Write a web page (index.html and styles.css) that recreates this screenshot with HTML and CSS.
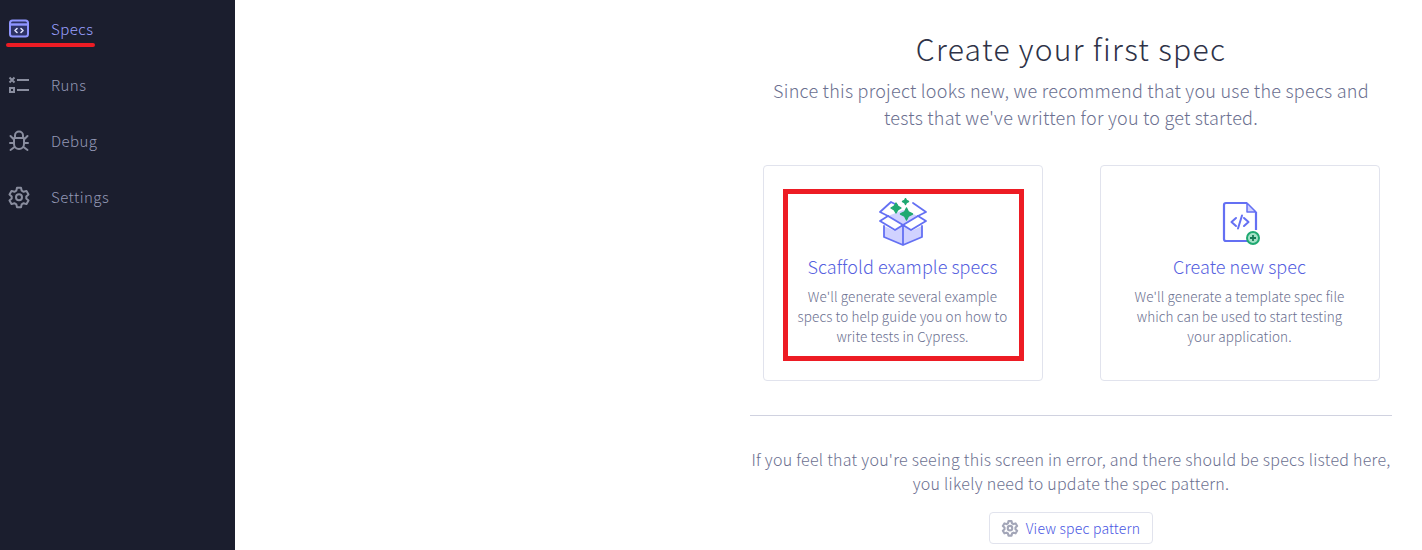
FILE: index.html
```html
<!DOCTYPE html>
<html lang="en">
<head>
  <meta charset="UTF-8">
  <title>Create your first spec</title>
  <link rel="stylesheet" href="styles.css">
</head>
<body>
  <nav class="sidebar">
    <a class="nav-item active">
      <svg class="nav-icon" viewBox="0 0 24 24" fill="none">
        <rect x="3" y="3.500" width="18" height="16" rx="2.500" fill="#2d3366" stroke="#8f95ff" stroke-width="2"/>
        <path d="M3 7.500h18" stroke="#8f95ff" stroke-width="2.400"/>
        <path d="M10 11.500l-2 2 2 2M14 11.500l2 2-2 2" stroke="#e1e3ff" stroke-width="1.600" stroke-linecap="round" stroke-linejoin="round"/>
      </svg>
      <span class="nav-label">Specs</span>
      <span class="mark-line"></span>
    </a>
    <a class="nav-item">
      <svg class="nav-icon" viewBox="0 0 24 24" fill="none" stroke="#8a8e9f" stroke-width="2">
        <path d="M2.500 4.500l5 5M7.500 4.500l-5 5"/>
        <rect x="3" y="15" width="4" height="4"/>
        <path d="M10 7h12M10 17h12"/>
      </svg>
      <span class="nav-label">Runs</span>
    </a>
    <a class="nav-item">
      <svg class="nav-icon" viewBox="0 0 24 24" fill="none" stroke="#8a8e9f" stroke-width="2" stroke-linecap="round" stroke-linejoin="round">
        <path d="M8 9V6.500a4 4 0 0 1 8 0V9M7 9h10M7 9v6a5 5 0 0 0 10 0V9"/>
        <path d="M7 10.500L3.500 7M17 10.500L20.500 7M7 14H3M17 14h4M7.500 18l-4 3M16.500 18l4 3"/>
      </svg>
      <span class="nav-label">Debug</span>
    </a>
    <a class="nav-item">
      <svg class="nav-icon" viewBox="0 0 24 24" fill="none" stroke="#8a8e9f" stroke-width="2" stroke-linejoin="round">
        <path d="M10 2.800h4l.7 2.900 1.900 1.100 2.900-.9 2 3.500-2.200 2v2.200l2.200 2-2 3.500-2.900-.9-1.900 1.100-.7 2.900h-4l-.7-2.900-1.900-1.100-2.900.9-2-3.500 2.200-2v-2.200l-2.200-2 2-3.500 2.900.9 1.900-1.100z"/>
        <circle cx="12" cy="12.200" r="3"/>
      </svg>
      <span class="nav-label">Settings</span>
    </a>
  </nav>

  <main class="content">
    <div class="panel">
      <h1>Create your first spec</h1>
      <p class="lead">Since this project looks new, we recommend that you use the specs and tests that we've written for you to get started.</p>

      <div class="cards">
        <div class="card">
          <span class="mark-box"></span>
          <svg class="card-icon" width="48" height="48" viewBox="0 0 48 48" fill="none" stroke="#6470f3" stroke-width="1.800" stroke-linejoin="round" stroke-linecap="round">
            <path d="M9 18L24 12l15 6-15 9z" fill="#d0d2ff" stroke="none"/>
            <path d="M24 27l-9 5.500L5 28v11l19 8 19-8V28l-10 4.500z" fill="#d0d2ff" stroke="none"/>
            <path d="M5 28v11l19 8 19-8V28M24 47V27"/>
            <path d="M24 27L16 32 1 23l8-5M24 27l8 5 15-9-8-5"/>
            <path d="M9 18L1 14 12 4l6 3M39 18l8-4-13-9"/>
            <path d="M9 18l15 9 15-9"/>
            <g fill="#1fa971" stroke="#1fa971" stroke-width="1.400">
              <path d="M17 5l1.800 3.200 3.200 1.800-3.200 1.800-1.800 3.200-1.800-3.200-3.200-1.800 3.200-1.800z"/>
              <path d="M26.500 .500l1 2 2 1-2 1-1 2-1-2-2-1 2-1z"/>
              <path d="M27.500 10l2 4 4 2-4 2-2 4-2-4-4-2 4-2z"/>
            </g>
          </svg>
          <h2>Scaffold example specs</h2>
          <p>We'll generate several example specs to help guide you on how to write tests in Cypress.</p>
        </div>
        <div class="card">
          <svg class="card-icon" width="48" height="48" viewBox="0 0 48 48" fill="none" stroke="#6470f3" stroke-width="2.200" stroke-linejoin="round">
            <path d="M31 5l9 9h-9z" fill="#d0d2ff" stroke-width="1.500"/>
            <path d="M31 5H10a2 2 0 0 0-2 2v34a2 2 0 0 0 2 2h22M40 14v18"/>
            <path d="M20 20l-4.500 4 4.500 4M28 20l4.500 4-4.500 4M26 17.500l-4 13" stroke-linecap="round" stroke-width="2"/>
            <circle cx="37" cy="40" r="6" fill="#a3e2c6" stroke="#1fa971" stroke-width="2"/>
            <path d="M37 37v6M34 40h6" stroke="#177a55" stroke-width="1.800"/>
          </svg>
          <h2>Create new spec</h2>
          <p>We'll generate a template spec file which can be used to start testing your application.</p>
        </div>
      </div>

      <div class="help">
        <p>If you feel that you're seeing this screen in error, and there should be specs listed here, you likely need to update the spec pattern.</p>
        <button class="pattern-btn" type="button">
          <svg width="18" height="18" viewBox="0 0 24 24" fill="none" stroke="#a3a6b8" stroke-width="2.800" stroke-linejoin="round">
            <path d="M10 2.800h4l.7 2.900 1.900 1.100 2.900-.9 2 3.500-2.200 2v2.200l2.200 2-2 3.500-2.900-.9-1.900 1.100-.7 2.900h-4l-.7-2.900-1.900-1.100-2.900.9-2-3.500 2.200-2v-2.200l-2.200-2 2-3.500 2.900.9 1.900-1.100z"/>
            <circle cx="12" cy="12.200" r="3"/>
          </svg>
          View spec pattern
        </button>
      </div>
    </div>
  </main>
</body>
</html>
```

FILE: styles.css
```css
/* Base styling */
html, body {
  height: 100%;
}
body {
  margin: 0;
  display: flex;
  overflow: hidden;
  font-family: "Noto Sans CJK KR", "Noto Sans", sans-serif;
  font-weight: 300;
  background: #fff;
  color: #6b7090;
}

/* Sidebar */
.sidebar {
  flex: 0 0 235px;
  background: #1b1e2e;
  padding-top: 1px;
}
.nav-item {
  position: relative;
  display: flex;
  align-items: center;
  gap: 20px;
  height: 56px;
  padding-left: 7px;
  font-size: 15px;
  letter-spacing: 0.45px;
  color: #9398b5;
}
.nav-label {
  padding-bottom: 2px;
}
.nav-item.active {
  color: #9aa0ff;
}
.nav-icon {
  width: 24px;
  height: 24px;
  flex: none;
}
.mark-line {
  position: absolute;
  left: 6px;
  top: 42px;
  width: 89px;
  height: 4px;
  border-radius: 2px;
  background: #ed1c24;
}

/* Main content */
.content {
  flex: 1;
  display: flex;
  justify-content: flex-end;
  padding-right: 30px;
}
.panel {
  width: 642px;
  text-align: center;
}
h1 {
  margin: 25px 0 0;
  font-size: 30px;
  line-height: 46px;
  font-weight: 300;
  letter-spacing: 1.3px;
  color: #2e3247;
}
.lead {
  width: 610px;
  margin: 6px auto 0;
  font-size: 18px;
  line-height: 27px;
  letter-spacing: 0.25px;
}

/* Cards */
.cards {
  display: flex;
  justify-content: center;
  gap: 57px;
  margin-top: 34px;
  padding-bottom: 34px;
  border-bottom: 1px solid #d0d2e0;
}
.card {
  position: relative;
  box-sizing: border-box;
  width: 280px;
  height: 216px;
  padding: 32px 16px 0;
  border: 1px solid #e1e3ed;
  border-radius: 4px;
}
.card-icon {
  display: block;
  margin: 0 auto;
}
.card h2 {
  margin: 7px 0 7px;
  font-size: 18px;
  line-height: 26px;
  font-weight: 300;
  letter-spacing: 0.05px;
  color: #5560e0;
}
.card p {
  margin: 0 14px;
  font-size: 13.500px;
  line-height: 20px;
  letter-spacing: 0.1px;
}
.mark-box {
  position: absolute;
  left: 19px;
  top: 23px;
  width: 241px;
  height: 172px;
  box-sizing: border-box;
  border: 5px solid #ed1c24;
}

/* Help text under the cards */
.help p {
  margin: 31px 0 0;
  font-size: 16px;
  line-height: 24px;
  letter-spacing: 0.27px;
}
.pattern-btn {
  display: inline-flex;
  align-items: center;
  gap: 7px;
  height: 32px;
  margin-top: 17px;
  padding: 0 12px 0 11px;
  border: 1px solid #e1e3ed;
  border-radius: 4px;
  background: #fff;
  font-family: inherit;
  font-weight: 300;
  font-size: 14px;
  letter-spacing: 0.2px;
  color: #4956e3;
}
```
